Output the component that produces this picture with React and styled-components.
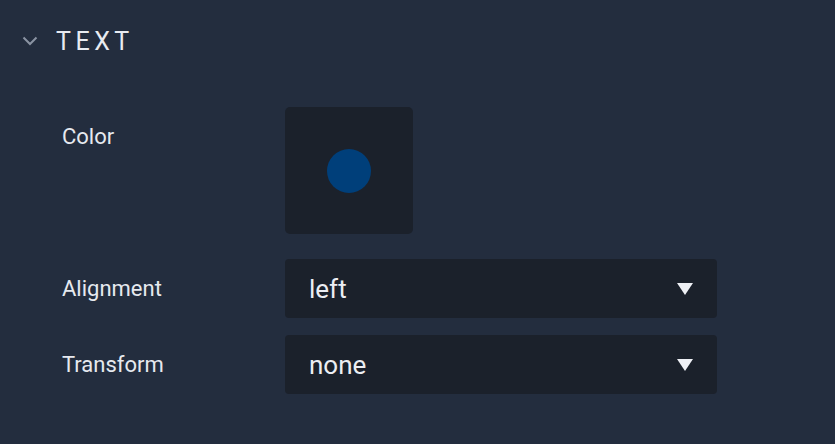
import React from "react";
import styled, { createGlobalStyle } from "styled-components";

const Global = createGlobalStyle`
  html, body { margin: 0; padding: 0; background: #232d3e; }
  body { font-family: Roboto, "Noto Sans", sans-serif; color: #e6e9ef; }
`;

const Panel = styled.div`
  width: 835px;
  height: 444px;
  background: #232d3e;
  box-sizing: border-box;
  padding-top: 26px;
`;

const Header = styled.div`
  display: flex;
  align-items: center;
  height: 30px;
  padding-left: 22px;
  gap: 18px;
`;

const Title = styled.div`
  font-size: 25px;
  letter-spacing: 4.5px;
  color: #e8ebf1;
  font-weight: 400;
`;

const Body = styled.div`
  display: flex;
  flex-direction: column;
  padding: 51px 0 0 62px;
`;

const Row = styled.div`
  display: grid;
  grid-template-columns: 223px 432px;
  align-items: ${(p) => (p.$top ? "start" : "center")};
  margin-bottom: ${(p) => p.$mb || 0}px;
`;

const Label = styled.div`
  font-size: 22px;
  color: #e6e9ef;
  line-height: ${(p) => (p.$top ? "60px" : "normal")};
`;

const Swatch = styled.div`
  width: 128px;
  height: 127px;
  background: #1b212b;
  border-radius: 5px;
  display: flex;
  align-items: center;
  justify-content: center;
`;

const Dot = styled.div`
  width: 44px;
  height: 44px;
  border-radius: 50%;
  background: #003f7a;
`;

const Select = styled.div`
  height: 59px;
  background: #1b212b;
  border-radius: 4px;
  display: flex;
  align-items: center;
  justify-content: space-between;
  padding: 0 24px;
  font-size: 26px;
  color: #eceef3;
`;

const Chevron = () => (
  <svg width="16" height="10" viewBox="0 0 16 10">
    <path d="M1.5 1.5 L8 8 L14.5 1.5" fill="none" stroke="#8a93a2" strokeWidth="2" />
  </svg>
);

const Caret = () => (
  <svg width="16" height="12" viewBox="0 0 16 12">
    <path d="M0 0 H16 L8 12 Z" fill="#eef0f5" />
  </svg>
);

export default function App() {
  return (
    <Panel>
      <Global />
      <Header>
        <Chevron />
        <Title>TEXT</Title>
      </Header>
      <Body>
        <Row $top $mb={25}>
          <Label $top>Color</Label>
          <Swatch>
            <Dot />
          </Swatch>
        </Row>
        <Row $mb={17}>
          <Label>Alignment</Label>
          <Select>
            <span>left</span>
            <Caret />
          </Select>
        </Row>
        <Row>
          <Label>Transform</Label>
          <Select>
            <span>none</span>
            <Caret />
          </Select>
        </Row>
      </Body>
    </Panel>
  );
}
